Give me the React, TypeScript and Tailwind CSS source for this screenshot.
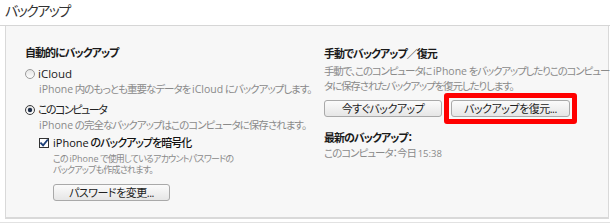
import React from "react";

// ─── Small controls ───────────────────────────────────────────────────────────

function Radio({ checked }: { checked?: boolean }) {
  const id = checked ? "rg1" : "rg0";
  return (
    <svg width="10" height="10" viewBox="0 0 10 10" className="shrink-0">
      <defs>
        <linearGradient id={id} x1="0" y1="0" x2="0" y2="1">
          <stop offset="0" stopColor="#e4e4e4" />
          <stop offset="1" stopColor="#ffffff" />
        </linearGradient>
      </defs>
      <circle cx="5" cy="5" r="4.5" fill={`url(#${id})`} stroke={checked ? "#3c3c3c" : "#9a9a9a"} strokeWidth="1" />
      {checked && <circle cx="5" cy="5" r="2.2" fill="#1f2f4a" />}
    </svg>
  );
}

function Checkbox() {
  return (
    <svg width="10" height="10" viewBox="0 0 10 10" className="shrink-0">
      <rect x="0.5" y="0.5" width="9" height="9" fill="#ffffff" stroke="#333333" strokeWidth="1" />
      <path d="M2 5.2 L4.1 7.4 L8.3 2.2" fill="none" stroke="#1c3f78" strokeWidth="1.8" strokeLinecap="square" />
    </svg>
  );
}

// Latin words keep normal spacing inside the tightly tracked Japanese text
function L({ children }: { children: React.ReactNode }) {
  return <span className="tracking-normal">{children}</span>;
}

function Button({ children, className = "" }: { children: React.ReactNode; className?: string }) {
  return (
    <div
      className={
        "flex h-[17px] items-center justify-center whitespace-nowrap rounded-[3px] border border-[#a9a9a9] bg-gradient-to-b from-[#fbfbfb] to-[#e6e6e6] text-[11px] leading-none tracking-[-0.5px] text-[#222] " +
        className
      }
    >
      {children}
    </div>
  );
}

// ─── Main ─────────────────────────────────────────────────────────────────────

export default function App() {
  return (
    <div
      className="h-[224px] w-[610px] overflow-hidden whitespace-nowrap bg-white [font-feature-settings:'palt']"
      style={{ fontFamily: "'Open Sans', 'Noto Sans CJK JP', sans-serif" }}
    >
      {/* Title */}
      <div className="h-[25px] pl-[5px] pt-[1px] text-[14px] leading-[20px] tracking-[-1.5px] text-[#333]">バックアップ</div>

      {/* Panel */}
      <div className="border-t border-[#d6d6d6]">
        <div className="ml-[5px] flex h-[193px] w-[604px] border-x border-b-2 border-[#d9d9d9] bg-[#f7f7f7] pt-[19px]">
          {/* Left column */}
          <div className="w-[318px] shrink-0 pl-[19px]">
            <div className="text-[11px] font-bold leading-[16px] tracking-[-1px] text-[#1a1a1a]">自動的にバックアップ</div>

            <div className="mt-[5px] flex h-[16px] items-center gap-[3px]">
              <Radio />
              <span className="text-[11.5px] leading-[16px] text-[#222]">iCloud</span>
            </div>
            <div className="pl-[14px] text-[10.5px] leading-[15px] tracking-[-1px] text-[#8a8a8a]">
              <L>iPhone</L> 内のもっとも重要なデータを <L>iCloud</L> にバックアップします。
            </div>

            <div className="mt-[5px] flex h-[16px] items-center gap-[3px]">
              <Radio checked />
              <span className="text-[11px] leading-[16px] tracking-[-1.5px] text-[#222]">このコンピュータ</span>
            </div>
            <div className="pl-[14px] text-[10.5px] leading-[14px] tracking-[-1px] text-[#8a8a8a]">
              <L>iPhone</L> の完全なバックアップはこのコンピュータに保存されます。
            </div>

            <div className="mt-[3px] flex h-[16px] items-center gap-[4px] pl-[14px]">
              <Checkbox />
              <span className="text-[11px] font-medium leading-[16px] tracking-[-1px] text-[#111]">
                <L>iPhone</L> のバックアップを暗号化
              </span>
            </div>
            <div className="mt-[2px] pl-[28px] text-[9px] leading-[11px] tracking-[-0.8px] text-[#8a8a8a]">
              <div>
                この <L>iPhone</L> で使用しているアカウントパスワードの
              </div>
              <div>バックアップも作成されます。</div>
            </div>
            <div className="mt-[9px] pl-[28px]">
              <Button className="w-[117px]">パスワードを変更...</Button>
            </div>
          </div>

          {/* Right column */}
          <div className="flex-1 pt-[1px]">
            <div className="text-[11px] font-bold leading-[16px] tracking-[-1px] text-[#1a1a1a]">手動でバックアップ／復元</div>
            <div className="mt-[2px] text-[10.5px] leading-[15px] tracking-[-1.15px] text-[#8a8a8a]">
              <div>
                手動で、このコンピュータに <L>iPhone</L> をバックアップしたりこのコンピュー
              </div>
              <div>タに保存されたバックアップを復元したりします。</div>
            </div>
            <div className="mt-[6px] flex gap-[9px]">
              <Button className="w-[118px]">今すぐバックアップ</Button>
              <div className="relative">
                <Button className="w-[119px]">バックアップを復元...</Button>
                {/* Red highlight annotation */}
                <div className="pointer-events-none absolute -left-[7px] -top-[7px] h-[31px] w-[133px] rounded-[3px] border-[5px] border-[#ff0000]" />
              </div>
            </div>
            <div className="mt-[13px] text-[11px] font-bold leading-[16px] tracking-[-1px] text-[#1a1a1a]">最新のバックアップ：</div>
            <div className="text-[10.5px] leading-[15px] tracking-[-1px] text-[#8a8a8a]">
              このコンピュータ：今日 <span className="text-[9.5px] tracking-normal">15:38</span>
            </div>
          </div>
        </div>
        <div className="h-[3px]" />
        <div className="h-px bg-[#e2e2e2]" />
      </div>
    </div>
  );
}
